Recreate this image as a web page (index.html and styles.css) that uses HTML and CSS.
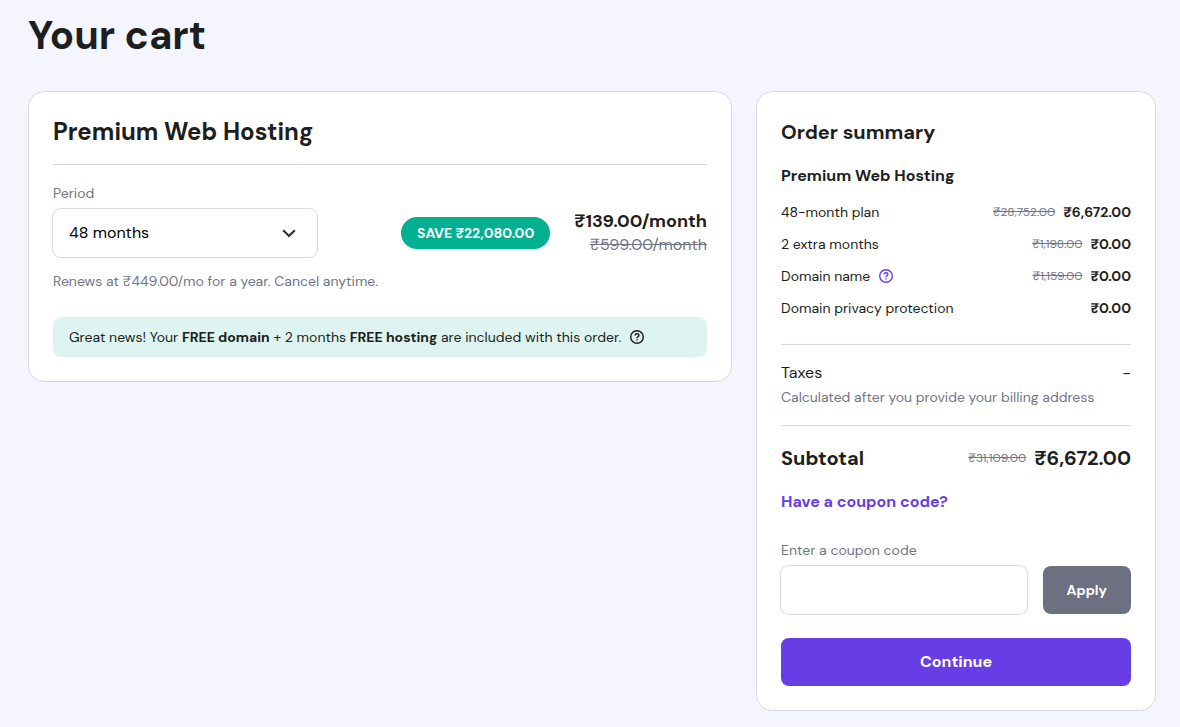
FILE: index.html
```html
<!DOCTYPE html>
<html lang="en">
<head>
    <meta charset="UTF-8">
    <meta name="viewport" content="width=device-width, initial-scale=1.0">
    <title>Your cart</title>
    <link rel="stylesheet" href="styles.css">
</head>
<body>
    <h1>Your cart</h1>

    <main class="cart">
        <section class="card">
            <h2 class="product-title">Premium Web Hosting</h2>

            <label class="field-label" for="period">Period</label>
            <div class="period-row">
                <div class="select-wrap">
                    <select id="period" class="field">
                        <option selected>48 months</option>
                        <option>24 months</option>
                        <option>12 months</option>
                        <option>1 month</option>
                    </select>
                    <svg class="chevron" width="14" height="9" viewBox="0 0 14 9" aria-hidden="true">
                        <path d="M1.2 1.2 7 7 12.8 1.2" fill="none" stroke="currentColor" stroke-width="2.2"/>
                    </svg>
                </div>
                <div class="period-price">
                    <span class="badge">SAVE ₹22,080.00</span>
                    <div class="prices">
                        <strong class="price-now">₹139.00/month</strong>
                        <s class="price-was">₹599.00/month</s>
                    </div>
                </div>
            </div>
            <p class="muted renews">Renews at ₹449.00/mo for a year. Cancel anytime.</p>

            <div class="notice">
                <p>Great news! Your <strong>FREE domain</strong> + 2 months <strong>FREE hosting</strong> are included with this order.</p>
                <svg class="help" viewBox="0 0 14 14" aria-hidden="true">
                    <circle cx="7" cy="7" r="6.3"/>
                    <path d="M5.1 5.6c0-1.1.8-1.9 1.9-1.9s1.9.7 1.9 1.7c0 1.3-1.9 1.5-1.9 2.8"/>
                    <path d="M7 9.2v1.4"/>
                </svg>
            </div>
        </section>

        <aside class="card">
            <h2 class="summary-title">Order summary</h2>
            <h3>Premium Web Hosting</h3>

            <ul class="items">
                <li class="line">
                    <span>48-month plan</span>
                    <span class="amount"><s>₹28,752.00</s> <strong>₹6,672.00</strong></span>
                </li>
                <li class="line">
                    <span>2 extra months</span>
                    <span class="amount"><s>₹1,198.00</s> <strong>₹0.00</strong></span>
                </li>
                <li class="line">
                    <span class="with-help">Domain name
                        <svg class="help help-accent" viewBox="0 0 14 14" aria-hidden="true">
                            <circle cx="7" cy="7" r="6.3"/>
                            <path d="M5.1 5.6c0-1.1.8-1.9 1.9-1.9s1.9.7 1.9 1.7c0 1.3-1.9 1.5-1.9 2.8"/>
                            <path d="M7 9.2v1.4"/>
                        </svg>
                    </span>
                    <span class="amount"><s>₹1,159.00</s> <strong>₹0.00</strong></span>
                </li>
                <li class="line">
                    <span>Domain privacy protection</span>
                    <span class="amount"><strong>₹0.00</strong></span>
                </li>
            </ul>

            <div class="taxes">
                <div class="line">
                    <span>Taxes</span>
                    <span>-</span>
                </div>
                <p class="muted">Calculated after you provide your billing address</p>
            </div>

            <div class="line subtotal">
                <strong>Subtotal</strong>
                <span class="amount"><s>₹31,109.00</s> <strong>₹6,672.00</strong></span>
            </div>

            <a class="coupon-link" href="#coupon">Have a coupon code?</a>

            <form>
                <label class="field-label" for="coupon">Enter a coupon code</label>
                <div class="coupon-row">
                    <input type="text" id="coupon" class="field">
                    <button type="button" class="btn btn-apply">Apply</button>
                </div>
                <button type="submit" class="btn btn-continue">Continue</button>
            </form>
        </aside>
    </main>
</body>
</html>
```
FILE: styles.css
```css
:root {
    --background: #f4f5ff;
    --text: #1d1e20;
    --muted: #727586;
    --border: #d8d8e0;
    --accent: #673de6;
    --success: #00b090;
    --success-light: #def4f0;
    --radius: 8px;
}

* {
    box-sizing: border-box;
}

body {
    margin: 0;
    padding: 11px 24px 16px 28px;
    font-family: "DM Sans", Inter, "Open Sans", sans-serif;
    font-size: 14px;
    line-height: 24px;
    color: var(--text);
    background: var(--background);
}

h1, h2, h3, p, ul {
    margin: 0;
}

h1 {
    margin-bottom: 32px;
    font-size: 40px;
    line-height: 48px;
}

.cart {
    display: grid;
    grid-template-columns: 1fr 400px;
    gap: 24px;
    align-items: start;
}

.card {
    padding: 24px;
    background: white;
    border: 1px solid var(--border);
    border-radius: 16px;
}

.product-title {
    padding-bottom: 16px;
    margin-bottom: 16px;
    font-size: 24px;
    line-height: 32px;
    border-bottom: 1px solid var(--border);
}

.muted {
    color: var(--muted);
}

/* Form fields */
.field-label {
    display: block;
    margin-bottom: 4px;
    color: var(--muted);
}

.field {
    width: 100%;
    height: 48px;
    padding: 0 16px;
    font: inherit;
    font-size: 16px;
    color: black;
    background: white;
    border: 0;
    border-radius: var(--radius);
    box-shadow: 0 0 0 1px var(--border);
    appearance: none;
}

.select-wrap {
    position: relative;
    width: 264px;
}

.chevron {
    position: absolute;
    top: 20px;
    right: 21px;
    color: #2f2f3a;
    pointer-events: none;
}

/* Period */
.period-row {
    display: flex;
    align-items: center;
    justify-content: space-between;
}

.period-price {
    display: flex;
    align-items: center;
    gap: 24px;
}

.badge {
    padding: 4px 16px;
    font-weight: bold;
    color: white;
    background: var(--success);
    border-radius: 16px;
}

.prices {
    display: flex;
    flex-direction: column;
    text-align: right;
}

.price-now {
    font-size: 18px;
}

.price-was {
    font-size: 16px;
    color: var(--muted);
}

.renews {
    margin: 12px 0 24px;
}

.notice {
    display: flex;
    align-items: center;
    gap: 9px;
    padding: 8px 16px;
    background: var(--success-light);
    border-radius: var(--radius);
}

.help {
    flex: none;
    width: 14px;
    height: 14px;
    fill: none;
    stroke: currentColor;
    stroke-width: 1.4;
}

.help-accent {
    color: var(--accent);
}

/* Order summary */
.summary-title {
    margin-bottom: 16px;
    font-size: 20px;
    line-height: 32px;
}

h3 {
    margin-bottom: 12px;
    font-size: 16px;
}

.items {
    display: grid;
    gap: 8px;
    padding: 0 0 24px;
    list-style: none;
}

.line {
    display: flex;
    align-items: center;
    justify-content: space-between;
}

.with-help {
    display: flex;
    align-items: center;
    gap: 9px;
}

.amount {
    display: flex;
    align-items: center;
    gap: 8px;
}

.amount s {
    font-size: 12px;
    color: var(--muted);
}

.taxes {
    padding: 16px 0;
    border: solid var(--border);
    border-width: 1px 0;
}

.taxes .line {
    font-size: 16px;
}

.subtotal {
    margin: 16px 0;
    line-height: 32px;
}

.subtotal strong {
    font-size: 20px;
}

.coupon-link {
    display: block;
    margin-bottom: 24px;
    font-size: 16px;
    font-weight: bold;
    color: var(--accent);
    text-decoration: none;
}

.coupon-row {
    display: flex;
    gap: 16px;
    margin-bottom: 24px;
}

.btn {
    height: 48px;
    padding: 0 24px;
    font: inherit;
    font-weight: bold;
    color: white;
    border: 0;
    border-radius: var(--radius);
    cursor: pointer;
}

.btn-apply {
    background: #6d7081;
}

.btn-continue {
    width: 100%;
    font-size: 16px;
    background: var(--accent);
}
```
